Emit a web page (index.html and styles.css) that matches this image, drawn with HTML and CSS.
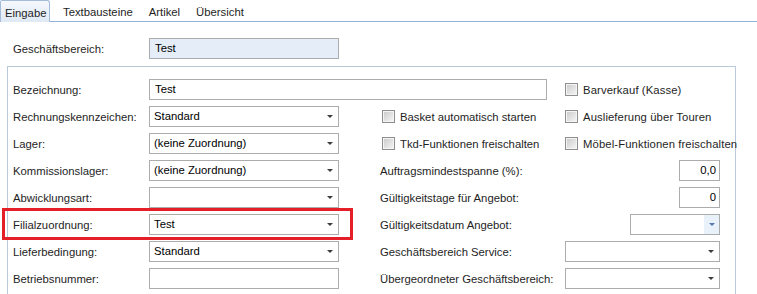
FILE: index.html
```html
<!DOCTYPE html>
<html lang="de">
<head>
    <meta charset="UTF-8">
    <meta name="viewport" content="width=device-width, initial-scale=1.0">
    <title>Geschäftsbereich</title>
    <link rel="stylesheet" href="styles.css">
</head>
<body>
    <div class="page">
        <div class="tabs">
            <div class="tab active">Eingabe</div>
            <div class="tab">Textbausteine</div>
            <div class="tab">Artikel</div>
            <div class="tab">Übersicht</div>
        </div>

        <div class="content">
            <div class="top-row">
                <span class="label">Geschäftsbereich:</span>
                <div class="field readonly">Test</div>
            </div>

            <div class="group">
                <div class="grid">
                    <!-- Zeile 1 -->
                    <span class="label">Bezeichnung:</span>
                    <div class="field wide">Test</div>
                    <label class="check right"><span class="box"></span>Barverkauf (Kasse)</label>

                    <!-- Zeile 2 -->
                    <span class="label">Rechnungskennzeichen:</span>
                    <div class="field select"><span>Standard</span><span class="arrow"></span></div>
                    <label class="check middle"><span class="box"></span>Basket automatisch starten</label>
                    <label class="check right"><span class="box"></span>Auslieferung über Touren</label>

                    <!-- Zeile 3 -->
                    <span class="label">Lager:</span>
                    <div class="field select"><span>(keine Zuordnung)</span><span class="arrow"></span></div>
                    <label class="check middle"><span class="box"></span>Tkd-Funktionen freischalten</label>
                    <label class="check right"><span class="box"></span>Möbel-Funktionen freischalten</label>

                    <!-- Zeile 4 -->
                    <span class="label">Kommissionslager:</span>
                    <div class="field select"><span>(keine Zuordnung)</span><span class="arrow"></span></div>
                    <span class="label middle">Auftragsmindestspanne (%):</span>
                    <div class="field number">0,0</div>

                    <!-- Zeile 5 -->
                    <span class="label">Abwicklungsart:</span>
                    <div class="field select"><span></span><span class="arrow"></span></div>
                    <span class="label middle">Gültigkeitstage für Angebot:</span>
                    <div class="field number">0</div>

                    <!-- Zeile 6 -->
                    <span class="label">Filialzuordnung:</span>
                    <div class="field select"><span>Test</span><span class="arrow"></span></div>
                    <span class="label middle">Gültigkeitsdatum Angebot:</span>
                    <div class="field date"><span class="date-btn"><span class="arrow blue"></span></span></div>

                    <!-- Zeile 7 -->
                    <span class="label">Lieferbedingung:</span>
                    <div class="field select"><span>Standard</span><span class="arrow"></span></div>
                    <span class="label middle">Geschäftsbereich Service:</span>
                    <div class="field select"><span></span><span class="arrow"></span></div>

                    <!-- Zeile 8 -->
                    <span class="label">Betriebsnummer:</span>
                    <div class="field"></div>
                    <span class="label middle">Übergeordneter Geschäftsbereich:</span>
                    <div class="field select"><span></span><span class="arrow"></span></div>
                </div>
            </div>
        </div>

        <div class="highlight"></div>
    </div>
</body>
</html>
```

FILE: styles.css
```css
html, body {
    margin: 0;
    overflow: hidden;
}
body {
    background: #fff;
    font-family: "Liberation Sans", Arial, sans-serif;
    font-size: 11.3px;
    color: #1e1e1e;
}
.page {
    position: relative;
    height: 294px;
    overflow: hidden;
}

/* Reiter */
.tabs {
    display: flex;
    height: 21px;
    border-bottom: 1px solid #93b3da;
}
.tab {
    padding: 3px 8px 0;
    line-height: 18px;
    white-space: nowrap;
}
.tab.active {
    width: 50px;
    box-sizing: border-box;
    padding: 3px 0 0 4px;
    margin-right: 5px;
    height: 22px;
    margin-bottom: -1px;
    border: 1px solid #a3bcd9;
    border-bottom: none;
    border-top-left-radius: 2px;
    border-top-right-radius: 3px;
    background: linear-gradient(#f5f8fc, #dfe9f5);
}

/* Inhalt */
.content {
    padding-top: 16px;
}
.top-row {
    display: flex;
    align-items: center;
    padding-left: 13px;
    margin-bottom: 7px;
}
.top-row .label {
    width: 136px;
}
.group {
    margin-left: 7px;
    width: 729px;
    box-sizing: border-box;
    border: 1px solid #b9c9da;
    padding: 9px 0 20px 5px;
}
.grid {
    display: grid;
    grid-template-columns: 136px 190px 41px 185px 155px;
    grid-auto-rows: 27px;
    align-items: center;
}
.grid > .label {
    grid-column: 1;
}
.grid > .field {
    grid-column: 2;
}
.grid > .middle {
    grid-column: 4;
}
.grid > .right,
.grid > .middle + .field {
    grid-column: 5;
}
.label {
    white-space: nowrap;
}

/* Eingabefelder */
.field {
    box-sizing: border-box;
    height: 21px;
    border: 1px solid #acacac;
    background: #fff;
    color: #000;
    padding: 0 4px 0 5px;
    line-height: 19px;
    white-space: nowrap;
}
.field.readonly {
    width: 190px;
    background: #e5eef8;
}
.grid > .field.wide {
    grid-column: 2 / 5;
    margin-right: 18px;
}
.field.select {
    display: flex;
    align-items: center;
    justify-content: space-between;
    padding-left: 4px;
    padding-right: 4px;
}
.arrow {
    width: 0;
    height: 0;
    border-left: 3px solid transparent;
    border-right: 3px solid transparent;
    border-top: 3px solid #3c3c3c;
    margin-right: 1px;
}
.arrow.blue {
    border-top-color: #5579ae;
    margin: 0;
}
.field.number {
    justify-self: end;
    width: 41px;
    text-align: right;
    padding-right: 3px;
}
.field.date {
    justify-self: end;
    width: 90px;
    display: flex;
    justify-content: flex-end;
    padding: 0;
}
.date-btn {
    width: 15px;
    display: flex;
    align-items: center;
    justify-content: center;
    background: #e9f1fa;
}

/* Checkboxen */
.check {
    display: flex;
    align-items: center;
    white-space: nowrap;
}
.check.middle {
    margin-left: 2px;
}
.check.right {
    letter-spacing: 0.1px;
}
.box {
    flex-shrink: 0;
    box-sizing: border-box;
    width: 13px;
    height: 13px;
    margin-right: 5px;
    border: 1px solid #8e8f8f;
    box-shadow: inset 0 0 0 1px #f4f4f4;
    background: linear-gradient(135deg, #c9c9c9, #f7f7f7);
}

/* Markierung */
.highlight {
    position: absolute;
    left: 2px;
    top: 208px;
    width: 351px;
    height: 32px;
    box-sizing: border-box;
    border: 3px solid #e41f28;
}
```
